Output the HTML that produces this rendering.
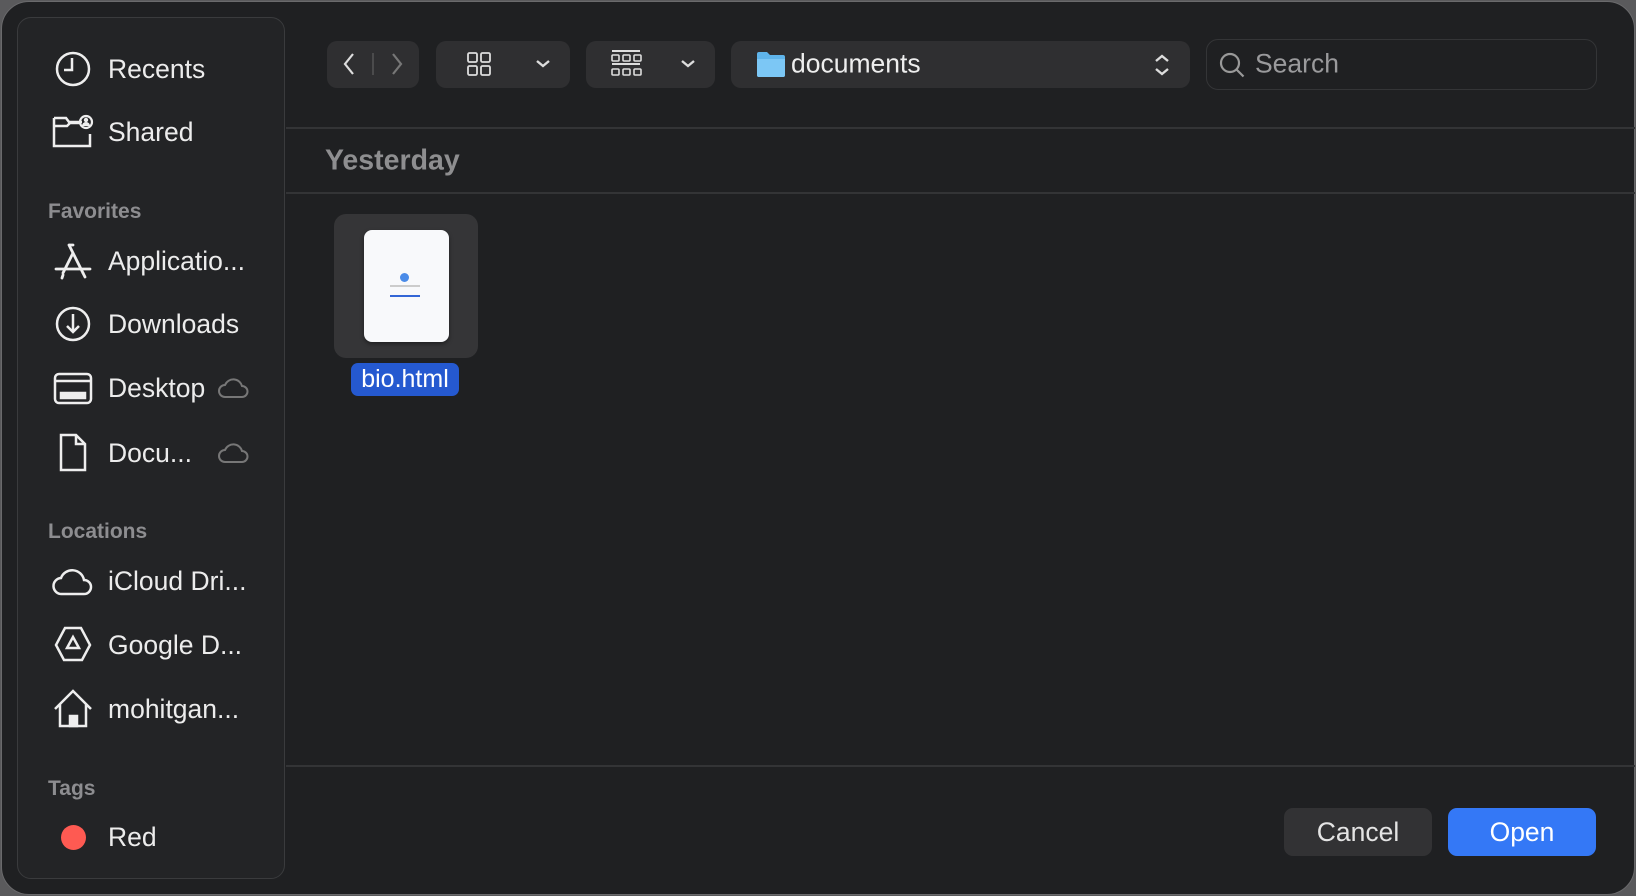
<!DOCTYPE html>
<html><head><meta charset="utf-8"><style>
*{margin:0;padding:0;box-sizing:border-box}
html,body{width:1636px;height:896px;overflow:hidden;background:#5a5a5c;font-family:"Liberation Sans",sans-serif}
.win{position:absolute;left:1px;top:1px;width:1634px;height:894px;background:#1f2022;border-radius:28px;border:1px solid #6a6a6c}
.side{position:absolute;left:17px;top:17px;width:268px;height:862px;background:#232426;border:1.5px solid #3a3b3d;border-radius:14px}
.it{position:absolute;left:108px;color:#ececec;font-size:26.5px;line-height:30px;transform:translateY(-50%);white-space:nowrap}
.hd{position:absolute;left:48px;color:#8d8d90;font-size:21px;font-weight:bold;transform:translateY(-50%)}
.ic{position:absolute;left:51px;width:44px;height:44px;transform:translateY(-50%)}
.btn{position:absolute;top:41px;height:47px;background:#2f2f31;border-radius:10px}
.line{position:absolute;left:286px;right:1px;height:2px;background:#333436}
</style></head><body>
<div class="win"></div>
<div class="side"></div>
<svg class="ic" style="top:69px" viewBox="0 0 44 44" fill="none" stroke="#eee" stroke-width="2.5"><circle cx="22" cy="22" r="16"/><path d="M21 11v12h-8"/></svg>
<div class="it" style="top:69px">Recents</div>
<svg class="ic" style="top:132px" viewBox="0 0 44 44" fill="none" stroke="#eee" stroke-width="2.5"><path d="M3 8h12l3 4h13M3 8v28h36V24M3 16h13l3-3h10"/><circle cx="35" cy="12" r="6" stroke-width="2.2"/><circle cx="35" cy="10" r="2.2" fill="#eee" stroke="none"/><path d="M31 16a4 4 0 0 1 8 0z" fill="#eee" stroke="none"/></svg>
<div class="it" style="top:132px">Shared</div>
<div class="hd" style="top:212px">Favorites</div>
<svg class="ic" style="top:261px" viewBox="0 0 44 44" fill="none" stroke="#eee" stroke-width="2.8" stroke-linecap="round"><path d="M18 6l14 28M22 14L12 34M5 30h34M18 6l4 0"/><path d="M12 36l-1 3M32 34l2 4"/></svg>
<div class="it" style="top:261px">Applicatio...</div>
<svg class="ic" style="top:324px" viewBox="0 0 44 44" fill="none" stroke="#eee" stroke-width="2.5"><circle cx="22" cy="22" r="16"/><path d="M22 12v18M16 24l6 6 6-6"/></svg>
<div class="it" style="top:324px">Downloads</div>
<svg class="ic" style="top:388px" viewBox="0 0 44 44" fill="none" stroke="#eee" stroke-width="2.5"><rect x="4" y="8" width="36" height="29" rx="4"/><path d="M4 15h36"/><rect x="10" y="27" width="24" height="5" fill="#eee"/></svg>
<div class="it" style="top:388px">Desktop</div>
<svg style="position:absolute;left:217px;top:376px" width="34" height="24" viewBox="0 0 34 24" fill="none" stroke="#777" stroke-width="2"><path d="M8 21a6 6 0 0 1 0-12 9 9 0 0 1 17 1 5.5 5.5 0 0 1 0 11z"/></svg>
<svg class="ic" style="top:453px" viewBox="0 0 44 44" fill="none" stroke="#eee" stroke-width="2.5"><path d="M10 4h15l9 9v26H10zM25 4v9h9"/></svg>
<div class="it" style="top:453px">Docu...</div>
<svg style="position:absolute;left:217px;top:441px" width="34" height="24" viewBox="0 0 34 24" fill="none" stroke="#777" stroke-width="2"><path d="M8 21a6 6 0 0 1 0-12 9 9 0 0 1 17 1 5.5 5.5 0 0 1 0 11z"/></svg>
<div class="hd" style="top:532px">Locations</div>
<svg class="ic" style="top:581px" viewBox="0 0 44 44" fill="none" stroke="#eee" stroke-width="2.5"><path d="M11 35a8 8 0 0 1-1-16 12 12 0 0 1 23 2 7 7 0 0 1 0 14z"/></svg>
<div class="it" style="top:581px">iCloud Dri...</div>
<svg class="ic" style="top:645px" viewBox="0 0 44 44" fill="none" stroke="#eee" stroke-width="2.5"><path d="M14 5h16l9 17-8 15H13L5 22zM22 14l-6 11h12z"/></svg>
<div class="it" style="top:645px">Google D...</div>
<svg class="ic" style="top:709px" viewBox="0 0 44 44" fill="none" stroke="#eee" stroke-width="2.5"><path d="M4 22L22 4l18 18M9 17v22h26V17"/><rect x="19" y="29" width="7" height="10" fill="#eee"/></svg>
<div class="it" style="top:709px">mohitgan...</div>
<div class="hd" style="top:789px">Tags</div>
<div style="position:absolute;left:61px;top:825px;width:25px;height:25px;border-radius:50%;background:#fe5a52"></div>
<div class="it" style="top:837px">Red</div>

<div class="btn" style="left:327px;width:92px"></div>
<svg style="position:absolute;left:327px;top:41px" width="92" height="47" fill="none" stroke="#ddd" stroke-width="2.2"><path d="M26 13l-8 10 8 10"/><path d="M66 13l8 10-8 10" stroke="#777"/><path d="M46 12v22" stroke="#555" stroke-width="1.5"/></svg>
<div class="btn" style="left:436px;width:134px"></div>
<svg style="position:absolute;left:436px;top:41px" width="134" height="47" fill="none" stroke="#ddd" stroke-width="1.8"><rect x="32" y="12" width="9" height="9" rx="1.5"/><rect x="45" y="12" width="9" height="9" rx="1.5"/><rect x="32" y="25" width="9" height="9" rx="1.5"/><rect x="45" y="25" width="9" height="9" rx="1.5"/><path d="M101 20l6 5 6-5" stroke-width="2.4"/></svg>
<div class="btn" style="left:586px;width:129px"></div>
<svg style="position:absolute;left:586px;top:41px" width="129" height="47" fill="none" stroke="#ddd" stroke-width="1.6"><path d="M26 10h28M26 23h28" stroke-width="2"/><rect x="26" y="14" width="7" height="6" rx="1"/><rect x="37" y="14" width="7" height="6" rx="1"/><rect x="48" y="14" width="7" height="6" rx="1"/><rect x="26" y="28" width="7" height="6" rx="1"/><rect x="37" y="28" width="7" height="6" rx="1"/><rect x="48" y="28" width="7" height="6" rx="1"/><path d="M96 20l6 5 6-5" stroke-width="2.4"/></svg>
<div class="btn" style="left:731px;width:459px"></div>
<svg style="position:absolute;left:756px;top:51px" width="30" height="27"><path d="M1 3a2 2 0 0 1 2-2h8l3 3h13a2 2 0 0 1 2 2v18a2 2 0 0 1-2 2H3a2 2 0 0 1-2-2z" fill="#5fb4ea"/><path d="M1 8h28v16a2 2 0 0 1-2 2H3a2 2 0 0 1-2-2z" fill="#7cc7f5"/></svg>
<div style="position:absolute;left:791px;top:64px;transform:translateY(-50%);color:#eee;font-size:26.5px">documents</div>
<svg style="position:absolute;left:1150px;top:52px" width="24" height="26" fill="none" stroke="#ddd" stroke-width="2.4"><path d="M6 9l6-5 6 5M6 17l6 5 6-5"/></svg>
<div style="position:absolute;left:1206px;top:39px;width:391px;height:51px;border:1.5px solid #343537;border-radius:12px"></div>
<svg style="position:absolute;left:1218px;top:51px" width="28" height="28" fill="none" stroke="#999" stroke-width="2.2"><circle cx="12" cy="12" r="9"/><path d="M18.5 18.5l7 7"/></svg>
<div style="position:absolute;left:1255px;top:64px;transform:translateY(-50%);color:#9a9a9c;font-size:26.5px">Search</div>

<div class="line" style="top:127px"></div>
<div style="position:absolute;left:325px;top:161px;transform:translateY(-50%);color:#8e8e90;font-size:28.5px;font-weight:bold">Yesterday</div>
<div class="line" style="top:192px"></div>

<div style="position:absolute;left:334px;top:214px;width:144px;height:144px;background:#353537;border-radius:12px"></div>
<div style="position:absolute;left:364px;top:230px;width:85px;height:112px;background:#f8f9fb;border-radius:8px;box-shadow:0 2px 4px rgba(0,0,0,.4)"></div>
<div style="position:absolute;left:400px;top:273px;width:9px;height:9px;border-radius:50%;background:#4a8be8"></div>
<div style="position:absolute;left:390px;top:285px;width:30px;height:2px;background:#ccc"></div>
<div style="position:absolute;left:390px;top:295px;width:30px;height:2px;background:#3466d6"></div>
<div style="position:absolute;left:351px;top:363px;width:108px;height:33px;background:#2559d0;border-radius:7px;color:#fff;font-size:25px;text-align:center;line-height:33px">bio.html</div>

<div class="line" style="top:765px"></div>
<div style="position:absolute;left:1284px;top:808px;width:148px;height:48px;background:#323234;border-radius:9px;color:#e4e4e4;font-size:26.5px;text-align:center;line-height:48px">Cancel</div>
<div style="position:absolute;left:1448px;top:808px;width:148px;height:48px;background:#3478f6;border-radius:9px;color:#fff;font-size:26.5px;text-align:center;line-height:48px">Open</div>
</body></html>
